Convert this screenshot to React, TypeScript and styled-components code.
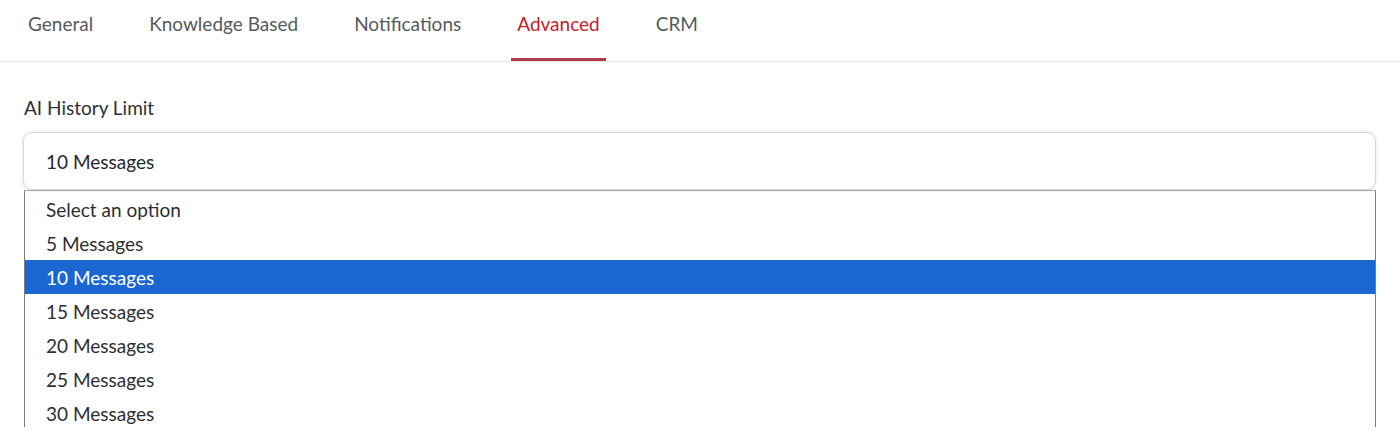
import { useState } from 'react';
import styled, { createGlobalStyle } from 'styled-components';

const GlobalStyle = createGlobalStyle`
  body {
    margin: 0;
    background: #fff;
    font-family: "Lato", "Noto Sans", sans-serif;
  }
`;

const Page = styled.div`
  width: 1400px;
  height: 437px;
  overflow: hidden;
  background: #fff;
`;

const TabBar = styled.nav`
  display: flex;
  gap: 44px;
  height: 61px;
  padding-left: 22px;
  border-bottom: 1px solid #e6e6e6;
`;

const Tab = styled.button<{ $active?: boolean }>`
  padding: 0 6px 12px;
  border: 0;
  background: none;
  font: inherit;
  font-size: 19px;
  color: ${p => (p.$active ? '#c3202c' : '#555a60')};
  cursor: pointer;
  display: flex;
  align-items: center;
  height: 61px;
  box-sizing: border-box;
  border-bottom: 3px solid ${p => (p.$active ? '#b23a48' : 'transparent')};
`;

const Content = styled.section`
  padding: 34px 24px 0 24px;
`;

const Label = styled.div`
  font-size: 19px;
  line-height: 24px;
  color: #2b2f33;
  margin-bottom: 12px;
`;

const SelectBox = styled.div`
  height: 58px;
  box-sizing: border-box;
  margin-left: -1px;
  border: 1px solid #ddd3d5;
  border-radius: 9px;
  box-shadow: 0 0 0 2px rgba(214, 80, 100, 0.07);
  display: flex;
  align-items: center;
  padding-left: 22px;
  font-size: 19px;
  color: #24282c;
`;

const OptionList = styled.ul`
  list-style: none;
  margin: 0;
  padding: 1px 0 0;
  height: 235px;
  overflow: hidden;
  border: 1px solid #7c7c7c;
  border-bottom: 0;
  border-top-color: #a9a9a9;
`;

const Option = styled.li<{ $selected?: boolean }>`
  height: 34px;
  display: flex;
  align-items: center;
  padding-left: 21px;
  font-size: 19px;
  color: ${p => (p.$selected ? '#fff' : '#2b2f33')};
  background: ${p => (p.$selected ? '#1a67d2' : 'transparent')};
`;

const tabs = ['General', 'Knowledge Based', 'Notifications', 'Advanced', 'CRM'];
const options = ['Select an option', '5 Messages', '10 Messages', '15 Messages', '20 Messages', '25 Messages', '30 Messages'];

export default function App() {
  const [active, setActive] = useState('Advanced');
  const [limit, setLimit] = useState('10 Messages');

  return (
    <Page>
      <GlobalStyle />
      <TabBar>
        {tabs.map(t => (
          <Tab key={t} $active={t === active} onClick={() => setActive(t)}>
            {t}
          </Tab>
        ))}
      </TabBar>
      <Content>
        <Label>AI History Limit</Label>
        <SelectBox>{limit}</SelectBox>
        <OptionList>
          {options.map(o => (
            <Option key={o} $selected={o === limit} onClick={() => setLimit(o)}>
              {o}
            </Option>
          ))}
        </OptionList>
      </Content>
    </Page>
  );
}
